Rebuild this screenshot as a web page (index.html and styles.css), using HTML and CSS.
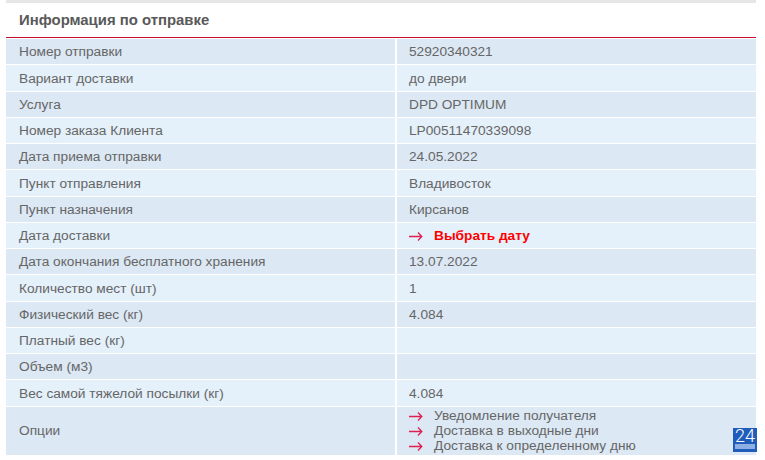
FILE: index.html
```html
<!DOCTYPE html>
<html lang="ru">
<head>
<meta charset="utf-8">
<title>Информация по отправке</title>
<link rel="stylesheet" href="styles.css">
</head>
<body>
<svg class="defs" width="0" height="0" aria-hidden="true"><symbol id="arrow" viewBox="0 0 14 10"><path d="M0 5.5H12.5M9 1.5L12.8 5.5L9 9.5" fill="none" stroke="#e0204f" stroke-width="1.3"/></symbol></svg>
<main class="panel">
  <h2 class="title">Информация по отправке</h2>
  <div class="info">
    <div class="row"><div class="key">Номер отправки</div><div class="val">52920340321</div></div>
    <div class="row"><div class="key">Вариант доставки</div><div class="val">до двери</div></div>
    <div class="row"><div class="key">Услуга</div><div class="val">DPD OPTIMUM</div></div>
    <div class="row"><div class="key">Номер заказа Клиента</div><div class="val">LP00511470339098</div></div>
    <div class="row"><div class="key">Дата приема отправки</div><div class="val">24.05.2022</div></div>
    <div class="row"><div class="key">Пункт отправления</div><div class="val">Владивосток</div></div>
    <div class="row"><div class="key">Пункт назначения</div><div class="val">Кирсанов</div></div>
    <div class="row"><div class="key">Дата доставки</div><div class="val"><span class="opt"><svg class="arrow"><use href="#arrow"/></svg><b class="pick">Выбрать дату</b></span></div></div>
    <div class="row"><div class="key">Дата окончания бесплатного хранения</div><div class="val">13.07.2022</div></div>
    <div class="row"><div class="key">Количество мест (шт)</div><div class="val">1</div></div>
    <div class="row"><div class="key">Физический вес (кг)</div><div class="val">4.084</div></div>
    <div class="row"><div class="key">Платный вес (кг)</div><div class="val"></div></div>
    <div class="row"><div class="key">Объем (м3)</div><div class="val"></div></div>
    <div class="row"><div class="key">Вес самой тяжелой посылки (кг)</div><div class="val">4.084</div></div>
    <div class="row row-tall"><div class="key">Опции</div><div class="val val-list">
      <span class="opt"><svg class="arrow"><use href="#arrow"/></svg>Уведомление получателя</span>
      <span class="opt"><svg class="arrow"><use href="#arrow"/></svg>Доставка в выходные дни</span>
      <span class="opt"><svg class="arrow"><use href="#arrow"/></svg>Доставка к определенному дню</span>
    </div></div>
  </div>
</main>
<div class="badge"><span class="badge-num">24</span><span class="badge-bar"></span></div>
</body>
</html>
```
FILE: styles.css
```css
* { box-sizing: border-box; }
html, body { margin: 0; padding: 0; background: #fff; }
body { width: 765px; height: 460px; overflow: hidden; font-family: "Liberation Sans", Arial, sans-serif; font-size: 13.7px; color: #666; position: relative; }
.defs { position: absolute; }
.panel { margin: 0 9px 0 6px; border-top: 3px solid #e6e6e6; }
.title { margin: 0; height: 35px; padding: 0 0 0 13px; font-size: 14.9px; line-height: 34px; font-weight: bold; color: #595959; border-bottom: 1px solid #c8102e; }
.info { display: flex; flex-direction: column; gap: 1px; padding-top: 1px; }
.row { display: grid; grid-template-columns: 389px 1fr; column-gap: 2px; height: 25.25px; }
.row > div { display: flex; align-items: center; padding-top: 0.6px; }
.row:nth-child(odd) > div { background: #dce8f4; }
.row:nth-child(even) > div { background: #e4f0fa; }
.key { padding-left: 13px; }
.val { padding-left: 12px; }
.row-tall { height: 48.5px; }
.row-tall > .key { padding: 0 0 1px 13px; }
.row > .val.val-list { flex-direction: column; align-items: flex-start; justify-content: center; line-height: 15px; padding-top: 0; }
.opt { display: flex; align-items: center; }
.arrow { width: 14px; height: 10px; margin-right: 11px; flex: none; }
.pick { color: #f00; }
.badge { position: absolute; left: 733px; top: 428px; width: 24px; height: 24px; background: #1f5cbc; color: #fff; display: flex; flex-direction: column; align-items: center; }
.badge-num { font-family: Roboto, sans-serif; font-weight: 300; font-size: 18px; line-height: 16px; }
.badge-bar { width: 20px; height: 5px; background: #8db0e4; }
```
